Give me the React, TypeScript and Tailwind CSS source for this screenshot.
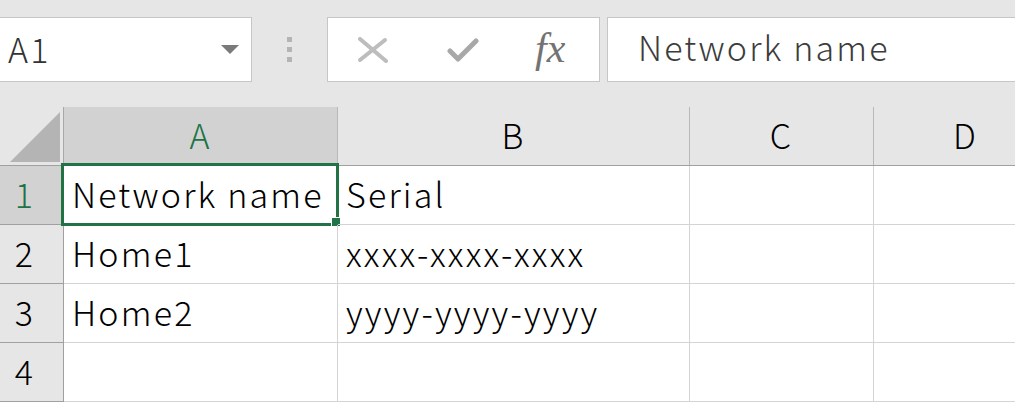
import React from "react";

const COLS = [
  { key: "A", w: "w-[274px]" },
  { key: "B", w: "w-[352px]" },
  { key: "C", w: "w-[184px]" },
  { key: "D", w: "w-[184px]" },
];

const ROWS = [
  ["Network name", "Serial", "", ""],
  ["Home1", "xxxx-xxxx-xxxx", "", ""],
  ["Home2", "yyyy-yyyy-yyyy", "", ""],
  ["", "", "", ""],
];

function CancelIcon() {
  return (
    <svg width="32" height="26" viewBox="0 0 32 26" fill="none">
      <path d="M3 2 L29 24" stroke="#bdbdbd" strokeWidth="4" strokeLinecap="round" />
      <path d="M28 3 L3 23" stroke="#bdbdbd" strokeWidth="4" strokeLinecap="round" />
    </svg>
  );
}

function EnterIcon() {
  return (
    <svg width="32" height="26" viewBox="0 0 32 26" fill="none">
      <path
        d="M3 14 L11 22 L29 4"
        stroke="#a8a8a8"
        strokeWidth="5"
        strokeLinecap="round"
        strokeLinejoin="round"
      />
    </svg>
  );
}

export default function App() {
  return (
    <div className="w-[1015px] h-[402px] overflow-hidden bg-white font-['Noto_Sans_CJK_JP',sans-serif] font-light tracking-[2.2px]">
      {/* formula bar */}
      <div className="h-[107px] bg-[#e6e6e6] pt-[17px] flex items-start">
        <div className="w-[252px] h-[65px] bg-white border border-[#c6c6c6] border-l-0 flex items-center pl-[8px] pr-[12px]">
          <span className="text-[34px] text-[#333] flex-1 leading-none pb-[2px]">A1</span>
          <div className="w-0 h-0 border-l-[9px] border-r-[9px] border-t-[9px] border-l-transparent border-r-transparent border-t-[#7a7a7a]" />
        </div>
        <div className="w-[75px] h-[65px] flex flex-col items-center justify-center gap-[5px]">
          <div className="w-[5px] h-[5px] bg-[#b4b4b4]" />
          <div className="w-[5px] h-[5px] bg-[#b4b4b4]" />
          <div className="w-[5px] h-[5px] bg-[#b4b4b4]" />
        </div>
        <div className="w-[273px] h-[65px] bg-white border border-[#c6c6c6] flex items-center pl-[29px]">
          <CancelIcon />
          <div className="w-[58px]" />
          <EnterIcon />
          <div className="w-[56px]" />
          <span className="font-['Liberation_Serif',serif] italic font-normal text-[42px] text-[#737373] leading-none tracking-normal pb-[4px]">
            fx
          </span>
        </div>
        <div className="w-[7px]" />
        <div className="flex-1 h-[65px] bg-white border border-[#c6c6c6] border-r-0 flex items-center pl-[30px] pb-[5px]">
          <span className="text-[34px] text-[#3c3c3c] leading-none">Network name</span>
        </div>
      </div>

      {/* column headers */}
      <div className="flex h-[59px] border-b border-[#a0a0a0]">
        <div className="w-[64px] shrink-0 bg-[#e6e6e6] border-r border-[#a8a8a8] flex items-end justify-end pr-[3px] pb-[3px]">
          <div className="w-0 h-0 border-b-[50px] border-l-[50px] border-b-[#b4b4b4] border-l-transparent" />
        </div>
        {COLS.map((c) => (
          <div
            key={c.key}
            className={`${c.w} shrink-0 ${c.key === "A" ? "bg-[#d2d2d2] text-[#217346]" : "bg-[#e6e6e6] text-black"} border-r border-[#b8b8b8] flex items-center justify-center text-[34px] leading-none pb-[2px]`}
          >
            {c.key}
          </div>
        ))}
      </div>

      {/* rows */}
      {ROWS.map((row, r) => (
        <div key={r} className="flex h-[59px]">
          <div
            className={`w-[64px] shrink-0 border-r border-b border-[#a0a0a0] flex items-center justify-center pr-[13px] pb-[3px] text-[34px] leading-none ${r === 0 ? "bg-[#d2d2d2] text-[#217346]" : "bg-[#e6e6e6] text-black"}`}
          >
            {r + 1}
          </div>
          {row.map((v, c) => (
            <div
              key={c}
              className={`${COLS[c].w} shrink-0 relative border-r border-b border-[#d4d4d4] flex items-center pl-[8px] pb-[3px] text-[34px] text-black leading-none whitespace-nowrap`}
            >
              {v}
              {r === 0 && c === 0 && (
                <>
                  <div className="absolute -left-[3px] -top-[3px] -right-[2px] -bottom-[2px] border-[3px] border-[#217346] pointer-events-none" />
                  <div className="absolute -right-[4px] -bottom-[3px] w-[10px] h-[10px] bg-[#217346] border border-white" />
                </>
              )}
            </div>
          ))}
        </div>
      ))}
    </div>
  );
}
